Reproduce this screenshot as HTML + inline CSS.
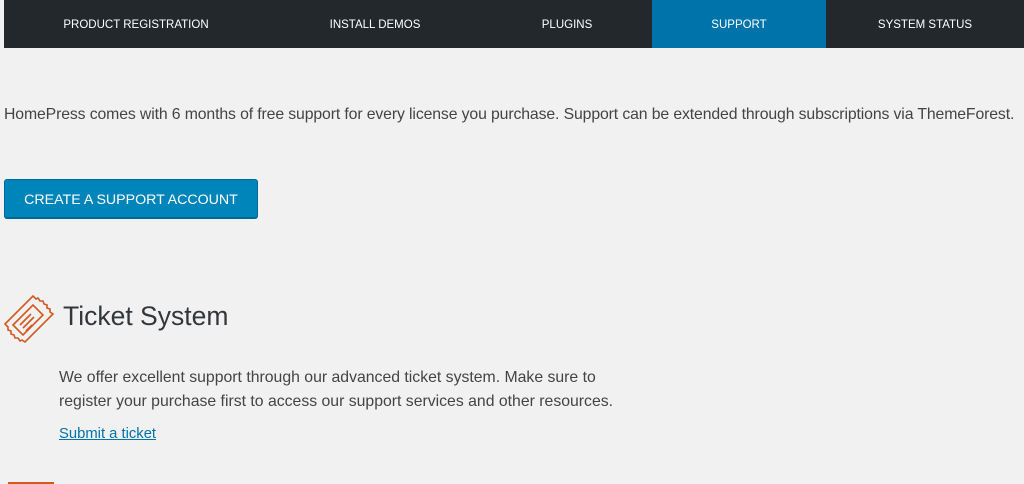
<!DOCTYPE html>
<html><head><style>
body{margin:0;width:1024px;height:484px;background:#f1f1f1;font-family:"Liberation Sans",sans-serif;overflow:hidden;position:relative;color:#444}
.nav{position:absolute;left:4px;top:0;width:1020px;height:48px;background:#23282d;}
.nav div{position:absolute;top:0;height:48px;line-height:50px;color:#fff;font-size:11.5px;text-align:center}
.sup{background:#0073aa}
p{margin:0;position:absolute}
</style></head><body>
<div class="nav">
<div style="left:0;width:264px">PRODUCT REGISTRATION</div>
<div style="left:264px;width:214px">INSTALL DEMOS</div>
<div style="left:478px;width:170px">PLUGINS</div>
<div class="sup" style="left:648px;width:174px">SUPPORT</div>
<div style="left:822px;width:198px">SYSTEM STATUS</div>
</div>
<p style="left:4px;top:106px;font-size:15.8px;color:#444;white-space:nowrap;letter-spacing:-0.12px">HomePress comes with 6 months of free support for every license you purchase. Support can be extended through subscriptions via ThemeForest.</p>
<div style="position:absolute;left:4px;top:179px;width:252px;height:37px;background:#0085ba;border:1px solid #006799;border-radius:3px;box-shadow:0 1px 0 #006799;color:#fff;font-size:14.2px;line-height:40px;text-align:center">CREATE A SUPPORT ACCOUNT</div>
<svg style="position:absolute;left:3px;top:294px" width="52" height="50" viewBox="0 0 52 50" fill="none" stroke="#d2581f" stroke-width="1.6">
<path d="M2 30 L30 2 L33 5 L35 4 L37 7 L40 7 L41 10 L44 11 L44 14 L47 15 L47 18 L50 20 L22 48 L19 46 L17 47 L15 44 L12 44 L11 41 L8 40 L8 37 L5 36 L5 33 Z"/>
<path d="M10 31 L30 11 L40 21 L20 41 Z"/>
<path d="M17 31 L28 20 M20 34 L31 23 M23 37 L29 31"/>
</svg>
<p style="left:63px;top:301px;font-size:26.5px;color:#32373c">Ticket System</p>
<p style="left:59px;top:366px;font-size:15.8px;line-height:24px;color:#444;width:580px">We offer excellent support through our advanced ticket system. Make sure to register your purchase first to access our support services and other resources.</p>
<p style="left:59px;top:426px;font-size:14.8px;color:#0073aa;text-decoration:underline">Submit a ticket</p>
<div style="position:absolute;left:8px;top:482px;width:46px;height:2px;background:#d2581f"></div>
</body></html>
